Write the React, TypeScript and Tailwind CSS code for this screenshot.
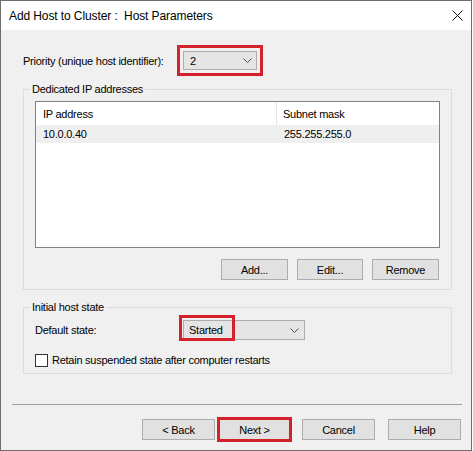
import React from "react";

function Chevron() {
  return (
    <svg width="9" height="5" viewBox="0 0 9 5" className="shrink-0">
      <polyline points="0.5,0.5 4.5,4.5 8.5,0.5" fill="none" stroke="#4d4d4d" strokeWidth="1" />
    </svg>
  );
}

function Btn({ children, className = "" }: { children: React.ReactNode; className?: string }) {
  return (
    <div className={"h-[21px] bg-[#e1e1e1] border border-[#adadad] flex items-center justify-center " + className}>
      {children}
    </div>
  );
}

export default function App() {
  return (
    <div className="w-[473px] h-[451px] bg-white text-[11px] leading-[14px] tracking-[-0.25px] text-black [font-family:'Liberation_Sans',Arial,sans-serif]">
      <div className="w-[472px] h-[451px] border border-[#6e6e6e] flex flex-col bg-[#f0f0f0]">
        {/* title bar */}
        <div className="h-[29px] bg-white flex items-center pl-[8px] pr-[8px] text-[12px] tracking-[-0.1px] shrink-0">
          <span className="whitespace-pre">Add Host to Cluster :  Host Parameters</span>
          <svg width="11" height="11" viewBox="0 0 11 11" className="ml-auto">
            <line x1="0.5" y1="0.5" x2="10.5" y2="10.5" stroke="#111" strokeWidth="1" />
            <line x1="10.5" y1="0.5" x2="0.5" y2="10.5" stroke="#111" strokeWidth="1" />
          </svg>
        </div>

        {/* body */}
        <div className="flex flex-col pl-[22px] pt-[15px]">
          <div className="flex items-center">
            <span className="w-[154px]">Priority (unique host identifier):</span>
            <div className="border-[3px] border-[#d3222a] p-[3px]">
              <div className="w-[74px] h-[19px] bg-[#e5e5e5] border border-[#adadad] flex items-center pl-[6px] pr-[4px]">
                <span>2</span>
                <span className="ml-auto flex"><Chevron /></span>
              </div>
            </div>
          </div>

          <fieldset className="mt-[6px] w-[429px] border border-[#dcdcdc] p-0 m-0">
            <legend className="ml-[6px] px-[2px] leading-[14px]">Dedicated IP addresses</legend>
            <div className="px-[11px] pt-[5px] pb-[9px] flex flex-col">
              <div className="w-full h-[147px] border border-[#828282] bg-white">
                <div className="flex h-[23px]">
                  <div className="w-[241px] h-full pl-[7px] flex items-center border-r border-[#e5e5e5]">IP address</div>
                  <div className="pl-[6px] flex items-center">Subnet mask</div>
                </div>
                <div className="flex h-[18px] items-center bg-[#efefef]">
                  <div className="w-[242px] pl-[7px]">10.0.0.40</div>
                  <div className="pl-[6px]">255.255.255.0</div>
                </div>
              </div>
              <div className="flex justify-end gap-[9px] mt-[11px] pr-[1px]">
                <Btn className="w-[67px]">Add...</Btn>
                <Btn className="w-[66px]">Edit...</Btn>
                <Btn className="w-[67px]">Remove</Btn>
              </div>
            </div>
          </fieldset>

          <fieldset className="mt-[10px] w-[429px] border border-[#dcdcdc] p-0 m-0">
            <legend className="ml-[6px] px-[2px] leading-[14px]">Initial host state</legend>
            <div className="px-[11px] pt-[6px] pb-[6px] flex flex-col">
              <div className="flex items-center">
                <span className="w-[148px]">Default state:</span>
                <div className="relative w-[122px] h-[20px] bg-[#e5e5e5] border border-[#adadad] flex items-center pl-[5px] pr-[5px]">
                  <span>Started</span>
                  <span className="ml-auto flex"><Chevron /></span>
                  <div className="absolute -left-[5px] -top-[6px] w-[56px] h-[26px] border-[3px] border-[#d3222a]" />
                </div>
              </div>
              <div className="flex items-center mt-[13px] gap-[4px]">
                <div className="w-[13px] h-[13px] border border-[#333333] bg-white shrink-0" />
                <span>Retain suspended state after computer restarts</span>
              </div>
            </div>
          </fieldset>

          <div className="mt-[30px] -ml-[11px] w-[450px] h-px bg-[#a0a0a0]" />

          <div className="flex justify-end pr-[10px] mt-[14px]">
            <Btn className="w-[73px]">&lt; Back</Btn>
            <div className="relative ml-[3px]">
              <Btn className="w-[73px]">Next &gt;</Btn>
              <div className="absolute -left-[1px] -top-[2px] w-[75px] h-[25px] border-[3px] border-[#d3222a]" />
            </div>
            <Btn className="w-[73px] ml-[11px]">Cancel</Btn>
            <Btn className="w-[73px] ml-[13px]">Help</Btn>
          </div>
        </div>
      </div>
    </div>
  );
}
